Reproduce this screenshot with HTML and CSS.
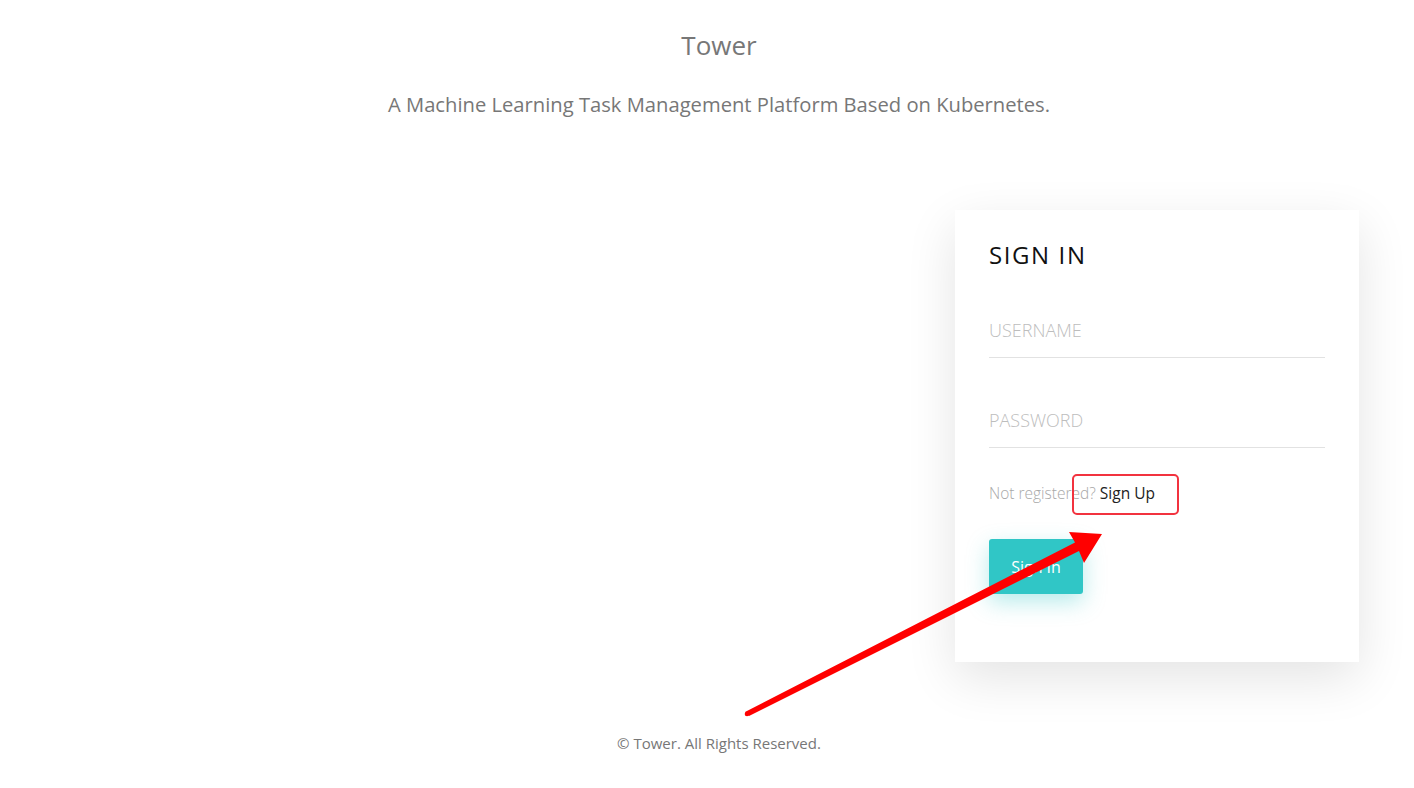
FILE: index.html
```html
<!DOCTYPE html>
<html lang="en">
<head>
<meta charset="utf-8">
<title>Tower</title>
<link rel="stylesheet" href="styles.css">
</head>
<body>
<div class="page">
  <header class="hero">
    <h1 class="title">Tower</h1>
    <p class="subtitle">A Machine Learning Task Management Platform Based on Kubernetes.</p>
  </header>
  <main class="main">
    <section class="card">
      <h2 class="card-title">SIGN IN</h2>
      <form class="form">
        <input class="field" type="text" placeholder="USERNAME">
        <input class="field field-gap" type="password" placeholder="PASSWORD">
        <p class="register">Not registered? <a class="register-link" href="#">Sign Up</a></p>
        <button class="btn" type="button">Sign In</button>
      </form>
    </section>
  </main>
  <footer class="footer">© Tower. All Rights Reserved.</footer>
</div>
<div class="highlight-box"></div>
<svg class="annotation" width="1414" height="788" viewBox="0 0 1414 788">
  <polygon points="745,712 1075,542.5 1069,532 1102,534 1084,563 1079,551 749,716" fill="#ff0000"/>
  <circle cx="747" cy="714" r="2.3" fill="#ff0000"/>
</svg>
</body>
</html>
```

FILE: styles.css
```css
html, body {
  margin: 0;
  padding: 0;
  background: #ffffff;
}

body {
  font-family: "Open Sans", "Noto Sans", sans-serif;
  color: #777777;
  position: relative;
  min-height: 788px;
}

.page {
  padding-left: 24px;
  display: flex;
  flex-direction: column;
}

.hero {
  text-align: center;
  padding-top: 26px;
}

.title {
  margin: 0;
  font-size: 26px;
  line-height: 39px;
  font-weight: 400;
  color: #777777;
}

.subtitle {
  margin: 24px 0 0;
  font-size: 20.2px;
  line-height: 30px;
  color: #777777;
}

.main {
  display: flex;
  justify-content: flex-end;
  margin-top: 91px;
  padding-right: 55px;
}

.card {
  width: 404px;
  box-sizing: border-box;
  padding: 27px 34px 68px;
  background: #ffffff;
  box-shadow: 0 16px 48px rgba(0, 0, 0, 0.11);
}

.card-title {
  margin: 0;
  font-size: 24px;
  line-height: 36px;
  font-weight: 400;
  letter-spacing: 1.6px;
  color: #111111;
}

.form {
  display: flex;
  flex-direction: column;
  align-items: flex-start;
  margin-top: 43px;
}

.field {
  width: 100%;
  box-sizing: content-box;
  height: 28px;
  padding: 0 0 13px;
  border: none;
  border-bottom: 1px solid #e2e2e2;
  outline: none;
  font-family: "Open Sans", "Noto Sans", sans-serif;
  font-size: 18px;
  font-weight: 300;
  color: #333;
  background: transparent;
}

.field::placeholder {
  color: #bdbdbd;
  font-weight: 300;
}

.field-gap {
  margin-top: 48px;
}

.register {
  margin: 34px 0 0;
  font-size: 15.5px;
  line-height: 22px;
  font-weight: 300;
  color: #a8a8a8;
}

.register-link {
  color: #222222;
  font-weight: 400;
  text-decoration: none;
}

.btn {
  margin-top: 35px;
  width: 94px;
  height: 55px;
  border: none;
  border-radius: 3px;
  background: #30c6c6;
  color: #ffffff;
  font-family: "Open Sans", "Noto Sans", sans-serif;
  font-size: 16px;
  box-shadow: 0 8px 22px rgba(48, 198, 198, 0.35);
}

.footer {
  text-align: center;
  margin-top: 70px;
  font-size: 15px;
  line-height: 22px;
  color: #777777;
}

.highlight-box {
  position: absolute;
  left: 1072px;
  top: 474px;
  width: 103px;
  height: 37px;
  border: 2px solid #f2333f;
  border-radius: 5px;
}

.annotation {
  position: absolute;
  left: 0;
  top: 0;
  pointer-events: none;
}
```
